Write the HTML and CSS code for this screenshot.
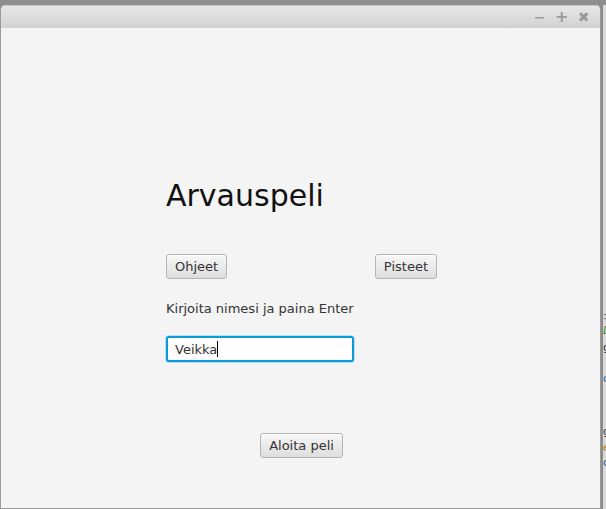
FILE: index.html
```html
<!DOCTYPE html>
<html>
<head>
<meta charset="utf-8">
<link rel="stylesheet" href="styles.css">
</head>
<body>
<div class="desktop">
  <div class="window">
    <div class="titlebar">
      <span class="ctl min">&#8722;</span>
      <span class="ctl">+</span>
      <span class="ctl x">&#10006;</span>
    </div>
    <div class="content">
      <h1 class="title">Arvauspeli</h1>
      <div class="row">
        <button class="btn">Ohjeet</button>
        <button class="btn">Pisteet</button>
      </div>
      <p class="label">Kirjoita nimesi ja paina Enter</p>
      <div class="field"><span>Veikka</span><span class="caret"></span></div>
      <div class="center">
        <button class="btn">Aloita peli</button>
      </div>
    </div>
  </div>
  <div class="behind">
    <span class="frag f1">&gt;</span>
    <span class="frag f2">L</span>
    <span class="frag f3">g</span>
    <span class="frag f4">c</span>
    <span class="frag f5">g</span>
    <span class="frag f6">e</span>
    <span class="frag f7">c</span>
  </div>
</div>
</body>
</html>
```
FILE: styles.css
```css
html, body {
  margin: 0;
  padding: 0;
  width: 606px;
  height: 509px;
  overflow: hidden;
}
body {
  background: #8e8e8e;
  font-family: "DejaVu Sans", sans-serif;
}
.desktop {
  display: flex;
  height: 509px;
}
.window {
  margin-top: 5px;
  width: 601px;
  height: 504px;
  box-sizing: border-box;
  border: 1px solid #9a9a9a;
  border-top-color: #c8c8c8;
  border-radius: 5px 5px 0 0;
  background: #f4f4f4;
  display: flex;
  flex-direction: column;
  overflow: hidden;
}
.titlebar {
  height: 22px;
  flex: none;
  background: linear-gradient(#e6e6e6, #d3d3d3);
  border-bottom: 1px solid #cfcfcf;
  display: flex;
  justify-content: flex-end;
  align-items: center;
  gap: 9px;
  padding-right: 10px;
  box-sizing: border-box;
}
.ctl {
  color: #9a9a9a;
  font-weight: bold;
  font-size: 16px;
  width: 13px;
  text-align: center;
  line-height: 14px;
}
.ctl.min {
  font-size: 14px;
}
.ctl.x {
  font-size: 14px;
}
.content {
  padding: 0 0 0 165px;
  width: 271px;
  display: flex;
  flex-direction: column;
}
.title {
  margin: 150px 0 0 0;
  font-weight: normal;
  font-size: 30px;
  line-height: 36px;
  color: #111;
}
.row {
  margin-top: 40px;
  display: flex;
  justify-content: space-between;
}
.btn {
  font-family: "DejaVu Sans", sans-serif;
  font-size: 13px;
  color: #333;
  height: 25px;
  padding: 0 8px;
  border: 1px solid #b5b5b5;
  border-radius: 3px;
  background: linear-gradient(#f7f7f7, #dedede);
  box-shadow: inset 0 1px 0 #fff;
}
.label {
  margin: 22px 0 0 0;
  font-size: 13px;
  line-height: 16px;
  color: #333;
}
.field {
  margin-top: 19px;
  width: 188px;
  height: 26px;
  box-sizing: border-box;
  border: 2px solid #0a9ad6;
  border-radius: 3px;
  background: #fff;
  box-shadow: 0 0 0 1px #b8e0f2;
  display: flex;
  align-items: center;
  padding-left: 7px;
  font-size: 13px;
  color: #333;
}
.caret {
  width: 1px;
  height: 16px;
  background: #000;
}
.center {
  margin-top: 71px;
  display: flex;
  justify-content: center;
  width: 271px;
}
.behind {
  flex: 1;
  background: #dadada;
  border-left: 2px solid #8a8a8a;
  position: relative;
  margin-top: 5px;
  overflow: hidden;
}
.frag {
  position: absolute;
  left: 0;
  font-size: 11px;
  line-height: 11px;
}
.f1 { top: 306px; color: #666; }
.f2 { top: 320px; color: #3a8a10; font-style: italic; }
.f3 { top: 337px; color: #333; }
.f4 { top: 368px; color: #1a5f8a; }
.f5 { top: 421px; color: #333; }
.f6 { top: 437px; color: #b07a00; }
.f7 { top: 452px; color: #1a5f8a; }
```
